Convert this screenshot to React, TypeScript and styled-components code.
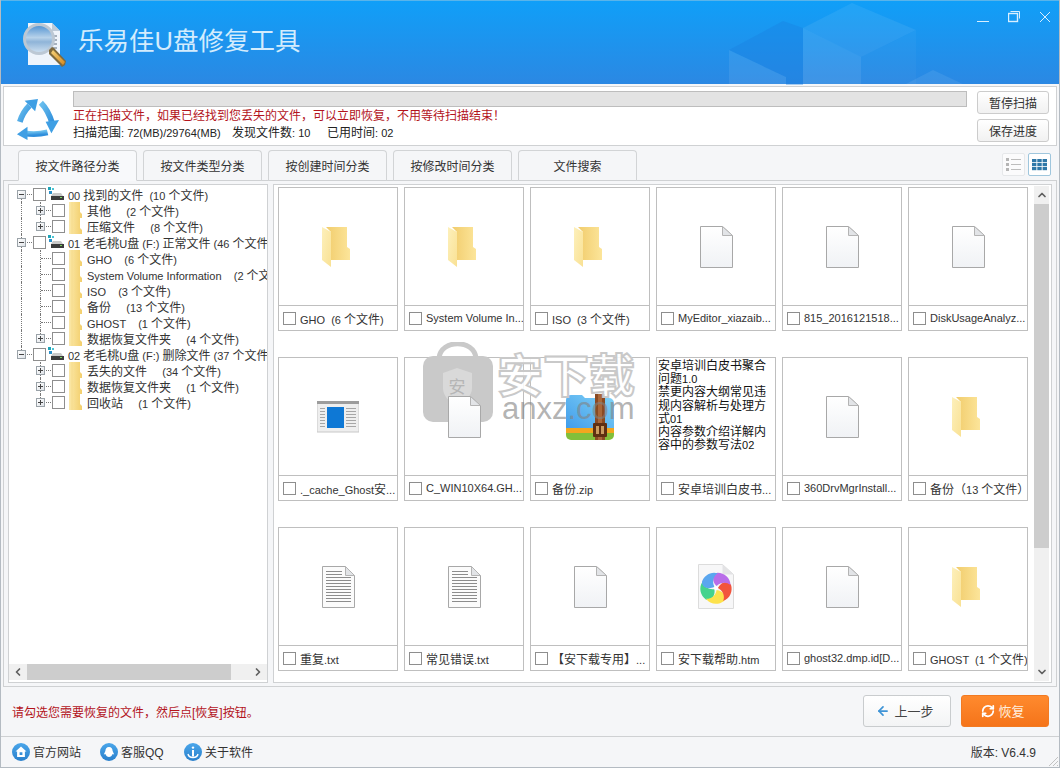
import React from "react";
import styled, { createGlobalStyle } from "styled-components";
import { ArrowLeft, ChevronDown, ChevronLeft, ChevronRight, ChevronUp, RefreshCw } from "lucide-react";

const FONT = `"Liberation Sans", "Noto Sans CJK SC", sans-serif`;

const GlobalStyle = createGlobalStyle`
  html, body {
    margin: 0;
    padding: 0;
    background: #f5f6f8;
    overflow: hidden;
  }
  * { box-sizing: border-box; }
`;

const Window = styled.div`
  position: relative;
  width: 1060px;
  height: 768px;
  display: flex;
  flex-direction: column;
  border: 1px solid #b4bbc2;
  border-top: none;
  background: #f5f6f8;
  font-family: ${FONT};
  font-size: 12px;
  color: #333;
`;

const Header = styled.header`
  position: relative;
  height: 84px;
  flex: none;
  display: flex;
  align-items: flex-start;
  padding: 21px 0 0 21px;
  background: linear-gradient(180deg, #109ff8 0%, #2b88e3 100%);
  border-top: 1px solid #59b4ea;
`;

const Cubes = styled.svg`
  position: absolute;
  left: 0;
  top: 0;
`;

const Title = styled.h1`
  position: relative;
  margin: 1px 0 0 10px;
  font-size: 25.5px;
  line-height: 36px;
  font-weight: 400;
  color: #d3ecfd;
  white-space: nowrap;
`;

const WinControls = styled.div`
  position: relative;
  margin-left: auto;
  margin-top: -11px;
  margin-right: 8px;
  display: flex;
  gap: 19px;
`;

const Body = styled.div`
  flex: 1;
  display: flex;
  flex-direction: column;
  padding: 0 2px;
`;

const ScanPanel = styled.section`
  height: 60px;
  margin-top: 2px;
  flex: none;
  display: flex;
  background: #fff;
  border: 1px solid #cfd1d3;
`;

const ScanIcon = styled.div`
  width: 69px;
  flex: none;
  padding: 10px 0 0 11px;
`;

const ScanInfo = styled.div`
  flex: 1;
  padding-top: 4px;
`;

const Progress = styled.div`
  height: 16px;
  background: #e3e3e3;
  border: 1px solid #bdbdbd;
`;

const ScanWarning = styled.div`
  margin-top: 1px;
  line-height: 17px;
  color: #b3141c;
  white-space: nowrap;
`;

const ScanStats = styled.div`
  display: grid;
  grid-template-columns: 159px 95px auto;
  line-height: 17px;
  color: #222;
  white-space: pre;
`;

const ScanButtons = styled.div`
  width: 72px;
  margin: 4px 7px 0 10px;
  flex: none;
  display: flex;
  flex-direction: column;
  gap: 5px;
`;

const ScanButton = styled.button`
  height: 23px;
  padding: 0;
  font: inherit;
  color: #333;
  background: linear-gradient(180deg, #fff 0%, #f1f1f1 100%);
  border: 1px solid #ccc;
  border-radius: 3px;
`;

const TabBar = styled.div`
  height: 34px;
  flex: none;
  display: flex;
  align-items: flex-end;
  padding-left: 15px;
`;

const TabList = styled.div`
  display: flex;
  gap: 6px;
`;

const Tab = styled.div<{ $active?: boolean }>`
  position: relative;
  width: 119px;
  height: 31px;
  margin-bottom: -1px;
  padding-bottom: 1px;
  display: flex;
  align-items: center;
  justify-content: center;
  background: ${(p) => (p.$active ? "#f8f9fb" : "#f5f6f8")};
  border: 1px solid #d2d4d6;
  border-bottom-color: ${(p) => (p.$active ? "#f8f9fb" : "#cfd1d3")};
  border-radius: 4px 4px 0 0;
  color: #333;
`;

const ViewToggles = styled.div`
  margin-left: auto;
  margin-right: 6px;
  margin-bottom: 4px;
  display: flex;
  gap: 3px;
`;

const ViewToggle = styled.div<{ $active?: boolean }>`
  width: 23px;
  height: 23px;
  display: flex;
  align-items: center;
  justify-content: center;
  background: ${(p) => (p.$active ? "#fff" : "#fbfbfc")};
  border: 1px solid ${(p) => (p.$active ? "#9fc6dd" : "#e6e8ea")};
  border-radius: 2px;
`;

const MainFrame = styled.div`
  height: 507px;
  flex: none;
  display: flex;
  gap: 5px;
  padding: 3px 4px;
  border: 1px solid #cfd1d3;
`;

const TreeBox = styled.div`
  width: 260px;
  flex: none;
  display: flex;
  flex-direction: column;
  background: #fff;
  border: 1px solid #cfd1d3;
  padding-bottom: 2px;
`;

const TreeBody = styled.div`
  flex: 1;
  min-height: 0;
  overflow: hidden;
  padding-top: 1px;
`;

const lineSpan = (kind: string) => {
  if (kind === "down") return "top: 8px; bottom: 0;";
  if (kind === "up") return "top: 0; height: 8px;";
  if (kind === "full") return "top: 0; bottom: 0;";
  return "display: none;";
};

const TreeRow = styled.div<{ $root: string; $child: string }>`
  position: relative;
  height: 16px;
  display: flex;
  align-items: center;
  white-space: pre;
  color: #333;

  &::before {
    content: "";
    position: absolute;
    left: 12px;
    border-left: 1px dotted #777;
    ${(p) => lineSpan(p.$root)}
  }

  &::after {
    content: "";
    position: absolute;
    left: 31px;
    border-left: 1px dotted #777;
    ${(p) => lineSpan(p.$child)}
  }
`;

const Gutter = styled.div<{ $level: number }>`
  position: relative;
  z-index: 1;
  width: 16px;
  height: 16px;
  flex: none;
  margin-left: ${(p) => (p.$level === 0 ? 8 : 27)}px;
  display: flex;
  align-items: center;

  &::after {
    content: "";
    position: absolute;
    left: 5px;
    right: 1px;
    top: 8px;
    border-top: 1px dotted #777;
  }
`;

const Expander = styled.span`
  position: relative;
  z-index: 1;
  width: 9px;
  height: 9px;
  background: linear-gradient(135deg, #fff 0%, #dfe3e8 100%);
  border: 1px solid #9aa2a8;
  font-size: 0;

  &::before {
    content: "";
    position: absolute;
    left: 1px;
    top: 3px;
    width: 5px;
    height: 1px;
    background: #444;
  }
`;

const ExpanderPlus = styled(Expander)`
  &::after {
    content: "";
    position: absolute;
    left: 3px;
    top: 1px;
    width: 1px;
    height: 5px;
    background: #444;
  }
`;

const Check = styled.span`
  width: 13px;
  height: 13px;
  flex: none;
  background: #fff;
  border: 1px solid #8e8e8e;
`;

const RowIcon = styled.span<{ $drive?: boolean }>`
  display: flex;
  flex: none;
  margin: ${(p) => (p.$drive ? "0 4px 0 2px" : "0 5px 0 4px")};
`;

const Latin = styled.span`
  font-size: 11px;
`;

const Panel = styled.div`
  position: relative;
  flex: 1;
  display: flex;
  background: #fff;
  border: 1px solid #cfd1d3;
  overflow: hidden;
`;

const CardGrid = styled.div`
  width: 760px;
  flex: none;
  display: grid;
  grid-template-columns: repeat(6, 120px);
  grid-auto-rows: 144px;
  column-gap: 6px;
  row-gap: 26px;
  padding: 2px 0 0 4px;
`;

const Card = styled.div`
  display: flex;
  flex-direction: column;
  border: 1px solid #bfbfbf;
`;

const Preview = styled.div`
  flex: 1;
  min-height: 0;
  display: flex;
  align-items: center;
  justify-content: center;
`;

const PreviewText = styled.div`
  align-self: flex-start;
  width: 118px;
  padding: 2px 0 0 1px;
  line-height: 13.2px;
  color: #111;
  white-space: pre-line;
`;

const Lifted = styled.div`
  position: relative;
  z-index: 2;
  display: flex;
`;

const Caption = styled.div`
  height: 25px;
  flex: none;
  display: flex;
  align-items: center;
  gap: 4px;
  padding-left: 4px;
  border-top: 1px solid #bfbfbf;
  color: #333;
  white-space: pre;
  overflow: hidden;
`;

const VScroll = styled.div`
  width: 15px;
  flex: none;
  margin: 1px 0 1px 0;
  display: flex;
  flex-direction: column;
  background: #f0f0f0;
`;

const VArrow = styled.div`
  height: 18px;
  flex: none;
  display: flex;
  align-items: center;
  justify-content: center;
  color: #606060;
`;

const VThumb = styled.div`
  height: 344px;
  flex: none;
  background: #cdcdcd;
`;

const ScrollFill = styled.div`
  flex: 1;
`;

const HScroll = styled.div`
  height: 16px;
  flex: none;
  display: flex;
  background: #f0f0f0;
`;

const HArrow = styled.div`
  width: 18px;
  flex: none;
  display: flex;
  align-items: center;
  justify-content: center;
  color: #606060;
`;

const HThumb = styled.div`
  width: 204px;
  background: #cdcdcd;
`;

const ActionBar = styled.div`
  height: 49px;
  flex: none;
  display: flex;
  align-items: center;
  gap: 10px;
  padding: 0 8px 2px 9px;
`;

const Hint = styled.div`
  margin-right: auto;
  padding-top: 2px;
  color: #b3141c;
`;

const BackButton = styled.button`
  width: 88px;
  height: 32px;
  padding: 0 4px 0 0;
  display: flex;
  align-items: center;
  justify-content: center;
  gap: 4px;
  font-family: inherit;
  font-size: 13px;
  color: #444;
  background: linear-gradient(180deg, #fff 0%, #f3f4f5 100%);
  border: 1px solid #c9ccce;
  border-radius: 3px;
`;

const RestoreButton = styled(BackButton)`
  gap: 3px;
  color: #ffeede;
  background: linear-gradient(180deg, #ff8a2e 0%, #f5741a 100%);
  border: 1px solid #f27a22;
`;

const Footer = styled.footer`
  flex: 1;
  position: relative;
  display: flex;
  align-items: center;
  gap: 18px;
  padding: 0 23px 1px 11px;
  margin: 0 -2px;
  border-top: 1px solid #cfd1d3;
  color: #333;
`;

const FooterLink = styled.div<{ $width: number }>`
  width: ${(p) => p.$width}px;
  display: flex;
  align-items: center;
  gap: 3px;
`;

const Version = styled.div`
  margin-left: auto;
  color: #333;
`;

const Grip = styled.svg`
  position: absolute;
  right: 0;
  bottom: 0;
`;

const Watermark = styled.div`
  position: absolute;
  z-index: 1;
  left: 421px;
  top: 342px;
  width: 220px;
  height: 82px;
  pointer-events: none;
`;

const MarkTitle = styled.div`
  position: absolute;
  left: 75px;
  top: 8px;
  font-size: 46px;
  line-height: 52px;
  font-weight: 700;
  color: rgba(255, 255, 255, 0.9);
  -webkit-text-stroke: 2px #c9c9c9;
  white-space: nowrap;
`;

const MarkSite = styled.div`
  position: absolute;
  left: 80px;
  top: 50px;
  font-size: 31px;
  line-height: 34px;
  color: rgba(130, 130, 130, 0.62);
  white-space: nowrap;
`;

const MarkShieldText = styled.div`
  position: absolute;
  left: 25px;
  top: 36px;
  width: 20px;
  text-align: center;
  font-size: 17px;
  line-height: 20px;
  color: #b5b5b5;
`;

// the app draws latin text a size below its CJK text
const Txt = ({ children }: { children: string }) => (
  <>
    {children.split(/([\x20-\x7e]+)/).map((part, i) => (i % 2 ? <Latin key={i}>{part}</Latin> : part))}
  </>
);

const FolderIcon = ({ small }: { small?: boolean }) =>
  small ? (
    <svg width="13" height="16" viewBox="0 0 13 16">
      <defs>
        <linearGradient id="fSmall" x1="0" x2="1" y1="0" y2="0">
          <stop offset="0" stopColor="#fbe8a8" />
          <stop offset="1" stopColor="#f3cf6c" />
        </linearGradient>
      </defs>
      <path d="M0 0h11v10l2 2v4H0z" fill="url(#fSmall)" />
      <path d="M3 0v16" stroke="#f6dc8e" />
    </svg>
  ) : (
    <svg width="40" height="40" viewBox="-4 0 40 40">
      <defs>
        <linearGradient id="fBack" x1="0" x2="1" y1="0" y2="0">
          <stop offset="0" stopColor="#f1cc6c" />
          <stop offset="1" stopColor="#fce59a" />
        </linearGradient>
        <linearGradient id="fLeaf" x1="0" x2="1" y1="0" y2="1">
          <stop offset="0" stopColor="#fdf0bb" />
          <stop offset="1" stopColor="#f9e194" />
        </linearGradient>
      </defs>
      <path d="M4 0h21v20l3 2v11H9V5z" fill="url(#fBack)" />
      <path d="M0 0l9 5v35l-9-7z" fill="url(#fLeaf)" />
    </svg>
  );

const DocIcon = () => (
  <svg width="33" height="42" viewBox="0 0 33 42">
    <defs>
      <linearGradient id="docFill" x1="0" x2="0" y1="0" y2="1">
        <stop offset="0" stopColor="#ffffff" />
        <stop offset="1" stopColor="#f0f2f5" />
      </linearGradient>
    </defs>
    <path d="M.5.5h22l10 9v32H.5z" fill="url(#docFill)" stroke="#a8a8a8" />
    <path d="M22.5.5v9h10z" fill="#e2e4e7" stroke="#b4b4b4" />
  </svg>
);

const TextDocIcon = () => (
  <svg width="33" height="42" viewBox="0 0 33 42">
    <path d="M.5.5h23l9 9v32H.5z" fill="#fbfbfb" stroke="#a8a8a8" />
    <path d="M23.5.5v9h9z" fill="#e2e4e7" stroke="#b4b4b4" />
    {[5, 8, 11, 14, 17, 20, 23, 26, 29, 32, 35].map((y) => (
      <path key={y} d={`M4 ${y + 0.5}H${y < 10 ? 20 : 29}`} stroke="#8c8c8c" />
    ))}
  </svg>
);

const AppWindowIcon = () => (
  <svg width="42" height="32" viewBox="0 0 42 32">
    <rect width="42" height="31" fill="#eeeeee" stroke="#c8c8c8" />
    <rect width="42" height="3" fill="#9c9c9c" />
    <rect x="10" y="6" width="17" height="21" fill="#0e78d5" />
    {[7, 10, 13, 16, 19, 22, 25].map((y) => (
      <path key={y} d={`M29 ${y + 0.5}h10M3 ${y + 0.5}h5`} stroke="#a6a6a6" />
    ))}
  </svg>
);

const ArchiveIcon = () => (
  <svg width="48" height="46" viewBox="0 0 48 46">
    <defs>
      <linearGradient id="rarBlue" x1="0" x2="1" y1="1" y2="0">
        <stop offset="0" stopColor="#3f9bea" />
        <stop offset="1" stopColor="#82d3f7" />
      </linearGradient>
    </defs>
    <path d="M5 1h11l3 3h24a5 5 0 0 1 5 5v27H0V6a5 5 0 0 1 5-5z" fill="url(#rarBlue)" />
    <rect y="34" width="48" height="6" fill="#f2a61f" />
    <path d="M0 39h48v2a5 5 0 0 1-5 5H5a5 5 0 0 1-5-5z" fill="#82bf3a" />
    <rect x="29" y="0" width="10" height="46" fill="#8a4a22" />
    <rect x="32" y="0" width="4" height="46" fill="#a9673a" />
    <rect x="27" y="29" width="14" height="14" rx="1" fill="#5f2f12" />
    <rect x="30" y="32" width="8" height="8" fill="#c99a5f" />
    <rect x="33" y="32" width="2" height="8" fill="#5f2f12" />
  </svg>
);

const PinwheelDocIcon = () => (
  <svg width="36" height="45" viewBox="0 0 36 45">
    <path d="M.5.5h24l11 10v34H.5z" fill="#f7f7f8" stroke="#dcdcdc" />
    <path d="M24.5.5v10h11z" fill="#e3e3e5" />
    {[
      ["#45d38d", 233],
      ["#fde24c", 161],
      ["#f2543d", 89],
      ["#b96de9", 17],
      ["#5aa6ef", -55],
    ].map(([c, a]) => (
      <path
        key={c as string}
        d="M0 -2C-6 -5 -8 -12 -3 -15C3 -17 11 -14 13 -7C8 -9 3 -7 0 -2z"
        fill={c as string}
        transform={`translate(18 24) rotate(${a})`}
      />
    ))}
    <circle cx="18" cy="24" r="2" fill="#fff" />
  </svg>
);

const DriveIcon = () => (
  <svg width="16" height="14" viewBox="0 0 16 14">
    <rect x="0" y="0" width="3" height="3" fill="#1fa4b8" />
    <rect x="4" y="1" width="2" height="2" fill="#4bc4d2" />
    <rect x="1" y="4" width="3" height="3" fill="#2b8fc9" />
    <path d="M5 6h8l2 3H3z" fill="#c9c9c9" />
    <rect x="3" y="9" width="13" height="4" fill="#3b3b3b" />
    <rect x="12" y="10" width="2" height="1" fill="#76d35b" />
  </svg>
);

const LogoIcon = () => (
  <svg width="46" height="46" viewBox="0 0 46 46">
    <defs>
      <linearGradient id="glass" x1="0" x2="0" y1="0" y2="1">
        <stop offset="0" stopColor="#4a8ed0" />
        <stop offset="0.45" stopColor="#b7d2ea" />
        <stop offset="0.6" stopColor="#8fb4d8" />
        <stop offset="1" stopColor="#d2e3f2" />
      </linearGradient>
      <linearGradient id="handle" x1="0" x2="1" y1="0" y2="1">
        <stop offset="0" stopColor="#f6d27a" />
        <stop offset="1" stopColor="#d58a1e" />
      </linearGradient>
    </defs>
    <path d="M6 1h24l8 8v34H6z" fill="#eef4fb" />
    {[14, 18, 22, 26, 30, 34].map((y) => (
      <path key={y} d={`M30 ${y}h5`} stroke="#8d9aa8" strokeWidth="1.5" />
    ))}
    <path d="M30 1v8h8z" fill="#bccad8" />
    <circle cx="17" cy="17" r="14.5" fill="url(#glass)" stroke="#bcc8d4" strokeWidth="3" />
    <path d="M27 28l3-3 2 1 12 13-1 4-3 2-13-13z" fill="#7f6a3d" />
    <path d="M31 28l12 12-2 3-12-12z" fill="url(#handle)" />
  </svg>
);

const RecycleIcon = () => (
  <svg width="46" height="44" viewBox="0 0 48 46">
    <defs>
      <linearGradient id="rec" x1="0" x2="1" y1="0" y2="1">
        <stop offset="0" stopColor="#6cc0ee" />
        <stop offset="1" stopColor="#2f8fdc" />
      </linearGradient>
    </defs>
    <g fill="none" stroke="url(#rec)" strokeWidth="6">
      <path d="M5 26Q8 16 15 9" />
      <path d="M27 6Q35 14 39 28" />
      <path d="M34 37Q22 40 10 38" />
    </g>
    <g fill="#3f9fe4">
      <path d="M10 4L24 2 21 15z" />
      <path d="M32 26L46 24 38 38z" />
      <path d="M13 31L2 39l11 6z" />
    </g>
  </svg>
);

const ListViewIcon = () => (
  <svg width="15" height="13" viewBox="0 0 15 13">
    {[0, 5, 10].map((y) => (
      <g key={y}>
        <rect y={y} width="3" height="3" fill="#b5b5b5" />
        <rect x="5" y={y + 1} width="10" height="1" fill="#bdbdbd" />
      </g>
    ))}
  </svg>
);

const GridViewIcon = () => (
  <svg width="15" height="12" viewBox="0 0 15 12">
    {[0, 4, 8].flatMap((y) =>
      [0, 5.3, 10.6].map((x) => <rect key={`${x}-${y}`} x={x} y={y} width="4.4" height="3.2" fill="#2f78a8" />)
    )}
  </svg>
);

const FootIcon = ({ kind }: { kind: "home" | "qq" | "info" }) => (
  <svg width="18" height="18" viewBox="0 0 18 18">
    <defs>
      <linearGradient id={`foot-${kind}`} x1="0" x2="0" y1="0" y2="1">
        <stop offset="0" stopColor="#4aa6ea" />
        <stop offset="1" stopColor="#2a80cc" />
      </linearGradient>
    </defs>
    <circle cx="9" cy="9" r="9" fill={`url(#foot-${kind})`} />
    {kind === "home" && (
      <path d="M9 3.5L3.5 8.5h1.6v5.5h7.8V8.5h1.6zM7.6 9.2h2.8V12H7.6z" fill="#fff" fillRule="evenodd" />
    )}
    {kind === "qq" && <path d="M9 4c2.5 0 3.6 2 3.6 4l1.6 3.5-1.6-.4C12 13 10.5 14 9 14s-3-1-3.6-2.9l-1.6.4L5.4 8C5.4 6 6.5 4 9 4z" fill="#fff" />}
    {kind === "info" && (
      <g fill="none" stroke="#fff">
        <circle cx="9" cy="4.6" r="1.2" fill="#fff" stroke="none" />
        <path d="M9 7v6.5" strokeWidth="2" />
        <path d="M4 11c.5 2.5 2.5 3.5 5 3.5s4.500-1 5-3.500" strokeWidth="1.400" />
      </g>
    )}
  </svg>
);

const WinMin = () => (
  <svg width="12" height="12" viewBox="0 0 12 12">
    <path d="M0 10.500h12" stroke="#d8efff" />
  </svg>
);

const WinRestore = () => (
  <svg width="12" height="12" viewBox="0 0 12 12" fill="none" stroke="#d8efff">
    <rect x="0.500" y="2.500" width="9" height="8" strokeWidth="1.400" />
    <path d="M2.500 .500h9v7" />
  </svg>
);

const WinClose = () => (
  <svg width="12" height="12" viewBox="0 0 12 12" stroke="#d8efff">
    <path d="M1 1l10 10M11 1L1 11" />
  </svg>
);

type TreeItem = { level: number; label: string; icon: "drive" | "folder"; expander?: "plus" | "minus"; root: string; child: string };

const treeItems: TreeItem[] = [
  { level: 0, label: "00 找到的文件  (10 个文件)", icon: "drive", expander: "minus", root: "down", child: "none" },
  { level: 1, label: "其他     (2 个文件)", icon: "folder", expander: "plus", root: "full", child: "full" },
  { level: 1, label: "压缩文件     (8 个文件)", icon: "folder", expander: "plus", root: "full", child: "up" },
  { level: 0, label: "01 老毛桃U盘 (F:) 正常文件 (46 个文件)", icon: "drive", expander: "minus", root: "full", child: "none" },
  { level: 1, label: "GHO    (6 个文件)", icon: "folder", root: "full", child: "full" },
  { level: 1, label: "System Volume Information    (2 个文件)", icon: "folder", root: "full", child: "full" },
  { level: 1, label: "ISO    (3 个文件)", icon: "folder", root: "full", child: "full" },
  { level: 1, label: "备份     (13 个文件)", icon: "folder", root: "full", child: "full" },
  { level: 1, label: "GHOST    (1 个文件)", icon: "folder", root: "full", child: "full" },
  { level: 1, label: "数据恢复文件夹     (4 个文件)", icon: "folder", expander: "plus", root: "full", child: "up" },
  { level: 0, label: "02 老毛桃U盘 (F:) 删除文件 (37 个文件)", icon: "drive", expander: "minus", root: "up", child: "none" },
  { level: 1, label: "丢失的文件     (34 个文件)", icon: "folder", expander: "plus", root: "none", child: "full" },
  { level: 1, label: "数据恢复文件夹     (1 个文件)", icon: "folder", expander: "plus", root: "none", child: "full" },
  { level: 1, label: "回收站     (1 个文件)", icon: "folder", expander: "plus", root: "none", child: "up" },
];

const cards: { icon: React.ReactNode; caption: string }[] = [
  { icon: <FolderIcon />, caption: "GHO  (6 个文件)" },
  { icon: <FolderIcon />, caption: "System Volume In..." },
  { icon: <FolderIcon />, caption: "ISO  (3 个文件)" },
  { icon: <DocIcon />, caption: "MyEditor_xiazaib..." },
  { icon: <DocIcon />, caption: "815_2016121518..." },
  { icon: <DocIcon />, caption: "DiskUsageAnalyz..." },
  { icon: <AppWindowIcon />, caption: "._cache_Ghost安..." },
  { icon: <Lifted><DocIcon /></Lifted>, caption: "C_WIN10X64.GH..." },
  { icon: <ArchiveIcon />, caption: "备份.zip" },
  {
    icon: (
      <PreviewText>
        <Txt>{"安卓培训白皮书聚合\n问题1.0\n禁更内容大纲常见违\n规内容解析与处理方\n式01\n内容参数介绍详解内\n容中的参数写法02"}</Txt>
      </PreviewText>
    ),
    caption: "安卓培训白皮书...",
  },
  { icon: <DocIcon />, caption: "360DrvMgrInstall..." },
  { icon: <FolderIcon />, caption: "备份（13 个文件）" },
  { icon: <TextDocIcon />, caption: "重复.txt" },
  { icon: <TextDocIcon />, caption: "常见错误.txt" },
  { icon: <DocIcon />, caption: "【安下载专用】..." },
  { icon: <PinwheelDocIcon />, caption: "安下载帮助.htm" },
  { icon: <DocIcon />, caption: "ghost32.dmp.id[D..." },
  { icon: <FolderIcon />, caption: "GHOST  (1 个文件)" },
];

const tabs = ["按文件路径分类", "按文件类型分类", "按创建时间分类", "按修改时间分类", "文件搜索"];

export default function App() {
  return (
    <Window>
      <GlobalStyle />
      <Header>
        <Cubes width="1060" height="84" viewBox="0 0 1060 84">
          <path d="M728 49l54-29 20 7v57h-17v-8z" fill="#1b7fe0" opacity="0.35" />
          <path d="M728 49l57 27v8h-57z" fill="#fff" opacity="0.08" />
          <path d="M802 27l49-25 64 27-55 27z" fill="#fff" opacity="0.07" />
          <path d="M802 27l58 29v28h-58z" fill="#fff" opacity="0.1" />
          <path d="M860 56l55-27v55h-55z" fill="#fff" opacity="0.03" />
          <path d="M903 84l29-15 32 15z" fill="#fff" opacity="0.08" />
        </Cubes>
        <LogoIcon />
        <Title>乐易佳U盘修复工具</Title>
        <WinControls>
          <WinMin />
          <WinRestore />
          <WinClose />
        </WinControls>
      </Header>

      <Body>
        <ScanPanel>
          <ScanIcon>
            <RecycleIcon />
          </ScanIcon>
          <ScanInfo>
            <Progress />
            <ScanWarning>正在扫描文件，如果已经找到您丢失的文件，可以立即恢复，不用等待扫描结束！</ScanWarning>
            <ScanStats>
              <span><Txt>扫描范围: 72(MB)/29764(MB)</Txt></span>
              <span><Txt>发现文件数: 10</Txt></span>
              <span><Txt>已用时间: 02</Txt></span>
            </ScanStats>
          </ScanInfo>
          <ScanButtons>
            <ScanButton>暂停扫描</ScanButton>
            <ScanButton>保存进度</ScanButton>
          </ScanButtons>
        </ScanPanel>

        <TabBar>
          <TabList>
            {tabs.map((t, i) => (
              <Tab key={t} $active={i === 0}>
                {t}
              </Tab>
            ))}
          </TabList>
          <ViewToggles>
            <ViewToggle>
              <ListViewIcon />
            </ViewToggle>
            <ViewToggle $active>
              <GridViewIcon />
            </ViewToggle>
          </ViewToggles>
        </TabBar>

        <MainFrame>
          <TreeBox>
            <TreeBody>
              {treeItems.map((item) => (
                <TreeRow key={item.label} $root={item.root} $child={item.child}>
                  <Gutter $level={item.level}>
                    {item.expander === "minus" && <Expander />}
                    {item.expander === "plus" && <ExpanderPlus />}
                  </Gutter>
                  <Check />
                  <RowIcon $drive={item.icon === "drive"}>{item.icon === "drive" ? <DriveIcon /> : <FolderIcon small />}</RowIcon>
                  <span><Txt>{item.label}</Txt></span>
                </TreeRow>
              ))}
            </TreeBody>
            <HScroll>
              <HArrow>
                <ChevronLeft size={12} strokeWidth={3.5} />
              </HArrow>
              <HThumb />
              <ScrollFill />
              <HArrow>
                <ChevronRight size={12} strokeWidth={3.5} />
              </HArrow>
            </HScroll>
          </TreeBox>

          <Panel>
            <CardGrid>
              {cards.map((c) => (
                <Card key={c.caption}>
                  <Preview>{c.icon}</Preview>
                  <Caption>
                    <Check />
                    <span><Txt>{c.caption}</Txt></span>
                  </Caption>
                </Card>
              ))}
            </CardGrid>
            <VScroll>
              <VArrow>
                <ChevronUp size={12} strokeWidth={3.5} />
              </VArrow>
              <VThumb />
              <ScrollFill />
              <VArrow>
                <ChevronDown size={12} strokeWidth={3.5} />
              </VArrow>
            </VScroll>
          </Panel>
        </MainFrame>

        <ActionBar>
          <Hint>请勾选您需要恢复的文件，然后点[恢复]按钮。</Hint>
          <BackButton>
            <ArrowLeft size={14} strokeWidth={3} color="#3f94d6" />
            上一步
          </BackButton>
          <RestoreButton>
            <RefreshCw size={14} strokeWidth={3} color="#fff" />
            恢复
          </RestoreButton>
        </ActionBar>

        <Footer>
          <FooterLink $width={70}>
            <FootIcon kind="home" />
            官方网站
          </FooterLink>
          <FooterLink $width={66}>
            <FootIcon kind="qq" />
            客服QQ
          </FooterLink>
          <FooterLink $width={70}>
            <FootIcon kind="info" />
            关于软件
          </FooterLink>
          <Version>版本: V6.4.9</Version>
          <Grip width="11" height="11" viewBox="0 0 11 11" stroke="#c2c2c2">
            <path d="M1 10l9-9M5 10l5-5M9 10l1-1" />
          </Grip>
        </Footer>
      </Body>

      <Watermark>
        <svg width="72" height="82" viewBox="0 0 72 82">
          <path d="M17 16C19 -3 52 -3 54 16" fill="none" stroke="#c9c9c9" strokeWidth="5" />
          <rect x="1" y="14" width="70" height="66" rx="10" fill="#c9c9c9" />
          <path d="M21 31l14-5 15 5v15c0 8-7 14-15 17-8-3-14-9-14-17z" fill="#d9d9d9" />
        </svg>
        <MarkShieldText>安</MarkShieldText>
        <MarkTitle>安下载</MarkTitle>
        <MarkSite>anxz.com</MarkSite>
      </Watermark>
    </Window>
  );
}
